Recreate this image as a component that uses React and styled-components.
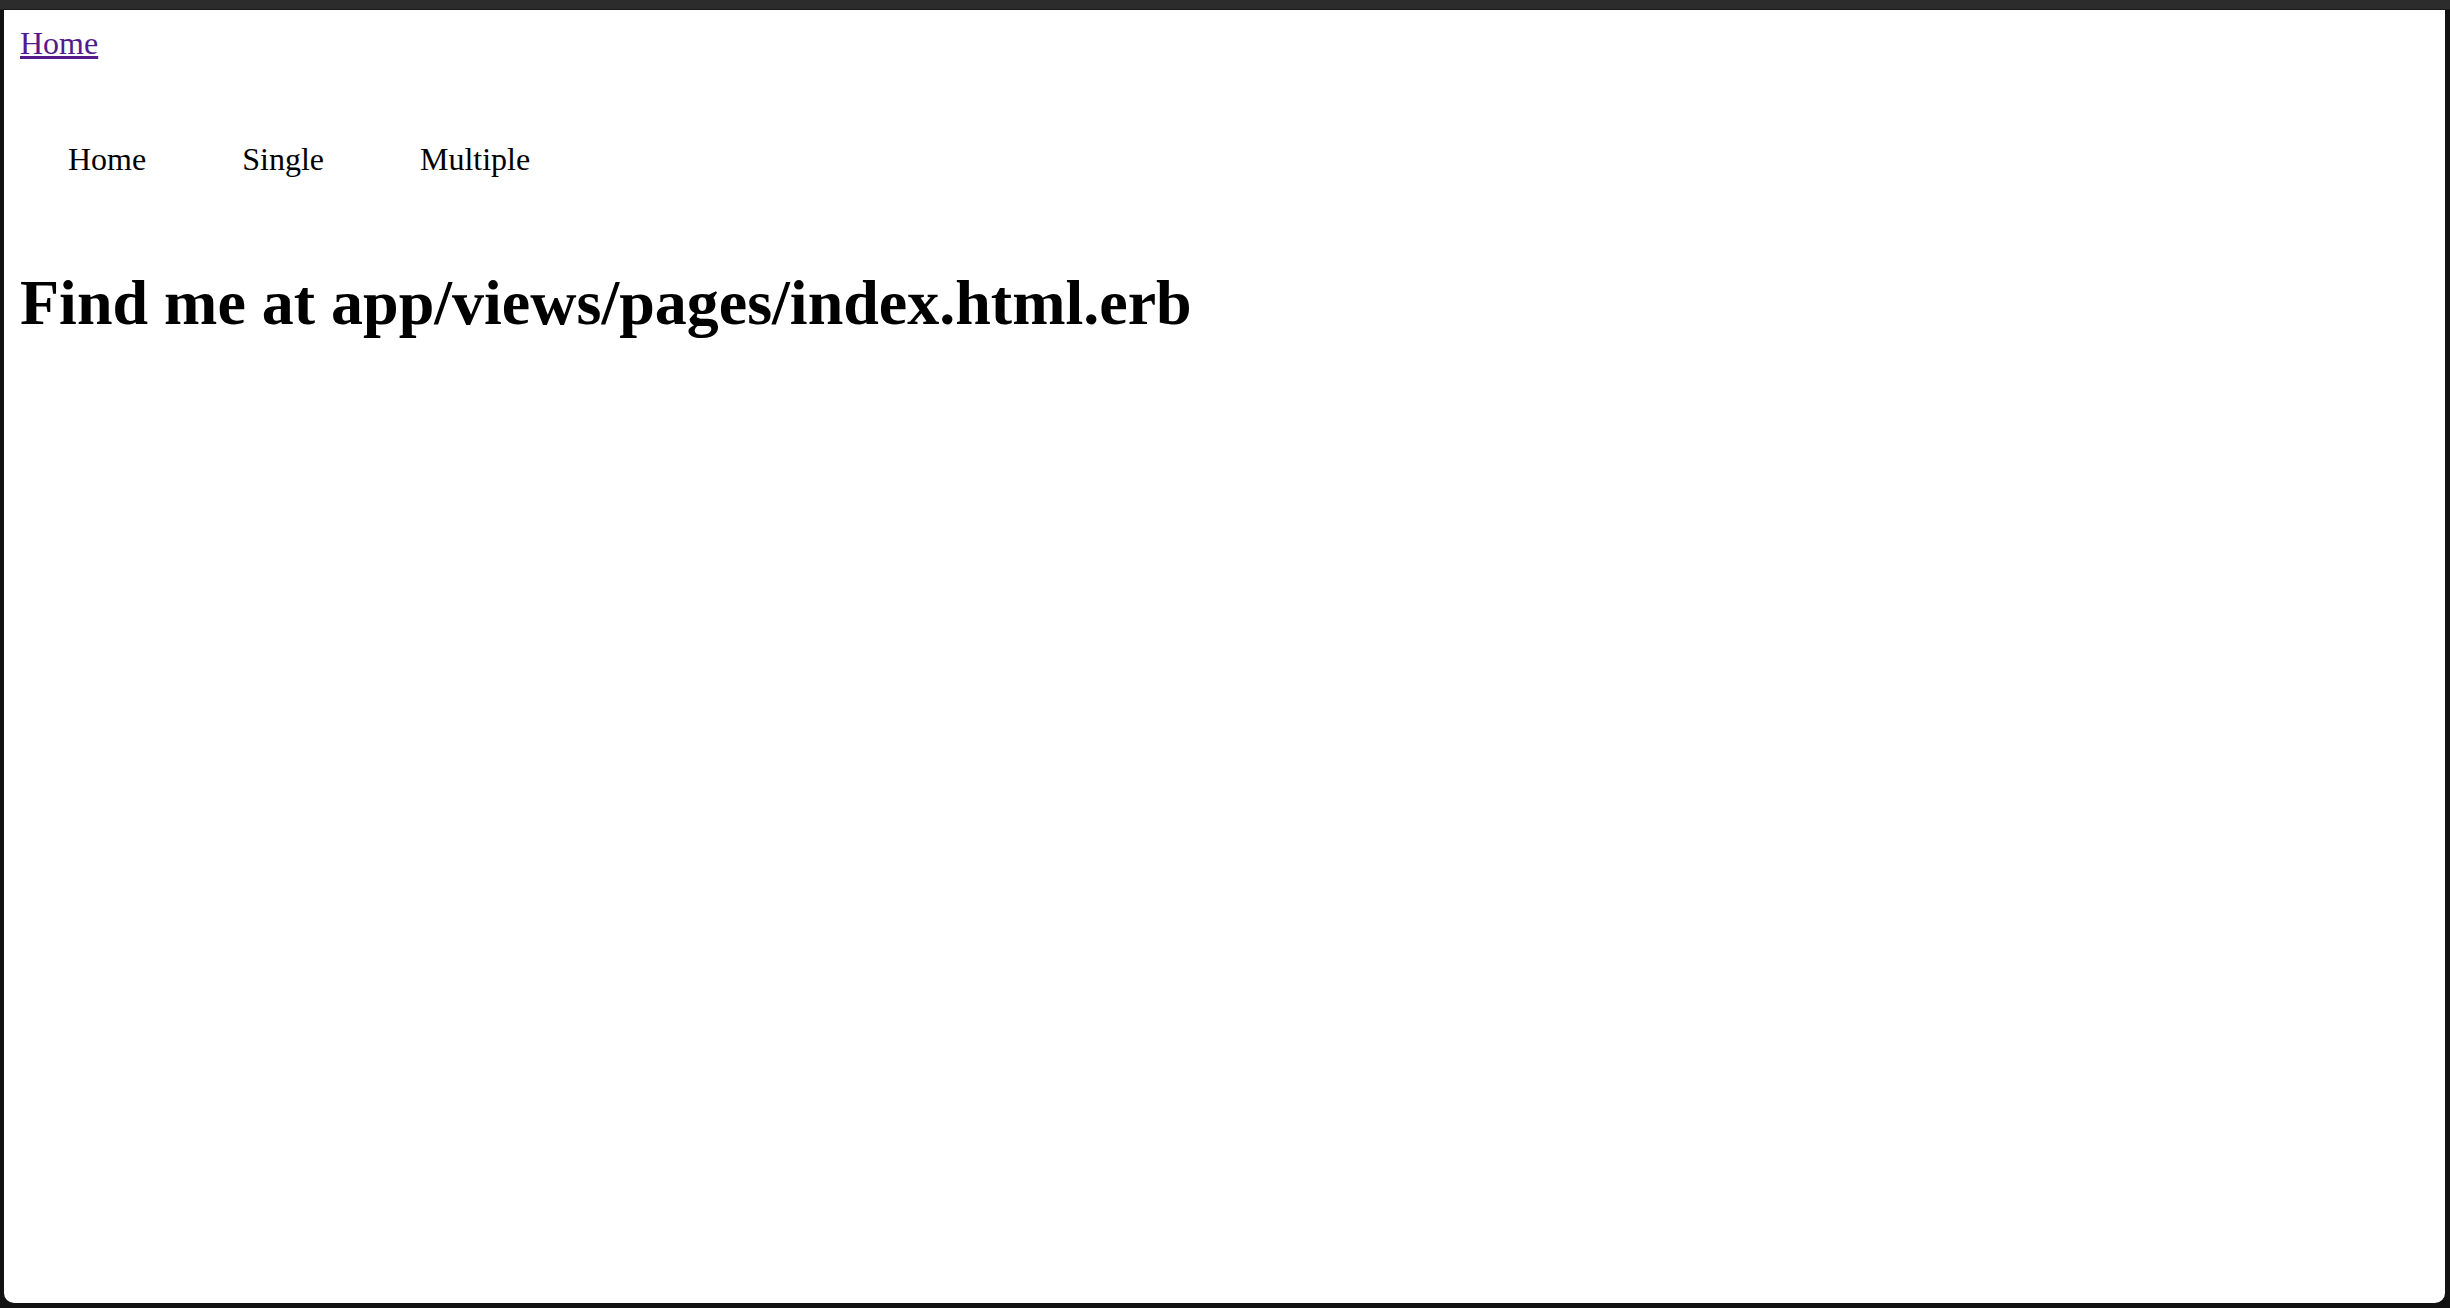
import React from "react";
import styled, { createGlobalStyle } from "styled-components";

const GlobalStyle = createGlobalStyle`
	html, body {
		margin: 0;
		padding: 0;
		background: #121212;
		font-family: "Liberation Serif", "Times New Roman", serif;
	}
`;

const Window = styled.div`
	display: flex;
	flex-direction: column;
	height: 100vh;
	background: #121212;
`;

const TitleBar = styled.div`
	height: 9px;
	background: #2c2c2c;
	border-bottom: 1px solid #1b1b1b;
	flex-shrink: 0;
`;

const Page = styled.main`
	flex: 1;
	margin: 0 5px 5px 4px;
	padding: 15px 16px;
	background: #ffffff;
	border-radius: 0 0 10px 10px;
	color: #000;
`;

const TopLink = styled.a`
	font-size: 32px;
	color: #551a8b;
	text-decoration: underline;
`;

const Nav = styled.nav`
	padding: 79px 0 45px;
`;

const NavList = styled.ul`
	display: flex;
	list-style: none;
	margin: 0;
	padding: 0;
`;

const NavItem = styled.li`
	padding: 0 48px;
	font-size: 32px;
	color: #000;
`;

const Heading = styled.h1`
	margin: 43px 0;
	font-size: 64px;
	font-weight: bold;
`;

const links = ["Home", "Single", "Multiple"];

export default function App() {
	return (
		<>
			<GlobalStyle />
			<Window>
				<TitleBar />
				<Page>
					<div>
						<TopLink href="#">Home</TopLink>
					</div>
					<Nav>
						<NavList>
							{links.map((l) => (
								<NavItem key={l}>{l}</NavItem>
							))}
						</NavList>
					</Nav>
					<Heading>Find me at app/views/pages/index.html.erb</Heading>
				</Page>
			</Window>
		</>
	);
}
